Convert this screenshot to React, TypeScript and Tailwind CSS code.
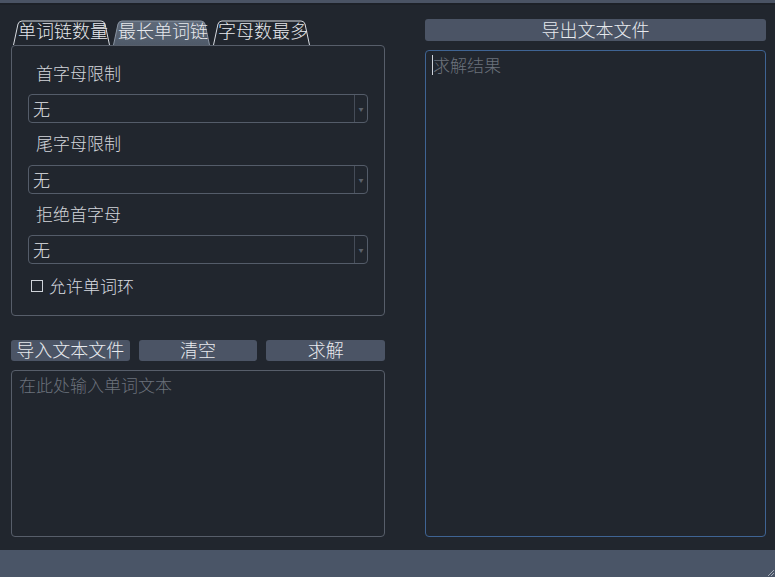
import React from "react";

const font = { fontFamily: '"Noto Sans CJK SC", "Noto Sans", sans-serif' };

function Tab({ label, selected, w }: { label: string; selected?: boolean; w: number }) {
  return (
    <div className="relative h-[27px] flex items-end pb-[3px]" style={{ width: w }}>
      <svg className="absolute inset-0" width={w} height={27} viewBox={`0 0 ${w} 27`}>
        <defs>
          <linearGradient id="selg" x1="0" y1="0" x2="0" y2="1">
            <stop offset="0" stopColor="#5f6a7a" />
            <stop offset="1" stopColor="#4f5a69" />
          </linearGradient>
        </defs>
        <path
          d={`M0.5 27 L5 6 Q6 3 9 3 L${w - 9} 3 Q${w - 6} 3 ${w - 5} 6 L${w - 0.5} 27 Z`}
          fill={selected ? "url(#selg)" : "none"}
        />
        <path
          d={`M0.5 27 L5 6 Q6 3 9 3 L${w - 9} 3 Q${w - 6} 3 ${w - 5} 6 L${w - 0.5} 27`}
          fill="none"
          stroke={selected ? "#8a95a3" : "#d8dce2"}
          strokeWidth="1"
        />
      </svg>
      <span className="relative pl-[5px] text-[18px] font-light leading-[24px] text-[#e6e8ec] whitespace-nowrap">{label}</span>
    </div>
  );
}

function Combo() {
  return (
    <div className="h-[29px] rounded-[4px] border border-[#545c69] flex items-center">
      <span className="flex-1 pl-[4px] text-[17px] font-light text-[#e2e4e8]">无</span>
      <div className="w-[13px] h-full border-l border-[#454c58] flex items-center justify-center">
        <span className="text-[5px] text-[#5a616c] leading-none">▼</span>
      </div>
    </div>
  );
}

export default function App() {
  return (
    <div className="w-[775px] h-[577px] bg-[#21262e] flex flex-col font-light" style={font}>
      <div className="h-[3px] bg-[#4a5364]" />
      <div className="h-[2px] bg-[#1d2128]" />
      <div className="flex-1 flex pl-[11px] pr-[9px] gap-[40px]">
        {/* Left column */}
        <div className="w-[374px] flex flex-col pt-[13px]">
          <div className="flex gap-[3px] pl-[2px]">
            <Tab label="单词链数量" w={97} />
            <Tab label="最长单词链" w={97} selected />
            <Tab label="字母数最多" w={97} />
          </div>
          <div className="h-[271px] rounded-[4px] border border-[#575e6a] px-[16px] pt-[17px] flex flex-col">
            <div className="h-[20px] pl-[8px] text-[17px] leading-[20px] text-[#d2d5da]">首字母限制</div>
            <div className="mt-[11px]"><Combo /></div>
            <div className="mt-[10px] h-[20px] pl-[8px] text-[17px] leading-[20px] text-[#d2d5da]">尾字母限制</div>
            <div className="mt-[12px]"><Combo /></div>
            <div className="mt-[10px] h-[20px] pl-[8px] text-[17px] leading-[20px] text-[#d2d5da]">拒绝首字母</div>
            <div className="mt-[11px]"><Combo /></div>
            <div className="mt-[12px] h-[20px] flex items-center pl-[3px] gap-[6px]">
              <div className="w-[12px] h-[12px] border border-[#cfd3d9]" />
              <span className="text-[17px] leading-[20px] text-[#d8dbe0]">允许单词环</span>
            </div>
          </div>
          <div className="mt-[24px] flex gap-[9px]">
            <div className="flex-1 h-[21px] pb-[2px] rounded-[3px] bg-[#4b5465] flex items-center justify-center text-[18px] text-[#e8eaee]">导入文本文件</div>
            <div className="flex-1 h-[21px] pb-[2px] rounded-[3px] bg-[#4b5465] flex items-center justify-center text-[18px] text-[#e8eaee]">清空</div>
            <div className="flex-1 h-[21px] pb-[2px] rounded-[3px] bg-[#4b5465] flex items-center justify-center text-[18px] text-[#e8eaee]">求解</div>
          </div>
          <div className="mt-[9px] h-[167px] rounded-[4px] border border-[#575e6a] px-[7px] pt-[2px]">
            <span className="text-[17px] leading-[24px] text-[#6c727c]">在此处输入单词文本</span>
          </div>
        </div>
        {/* Right column */}
        <div className="flex-1 flex flex-col pt-[14px]">
          <div className="h-[22px] pb-[2px] rounded-[3px] bg-[#4b5465] flex items-center justify-center text-[18px] text-[#e8eaee]">导出文本文件</div>
          <div className="mt-[9px] h-[487px] rounded-[4px] border border-[#3f6494] px-[6px] pt-[2px] flex items-start">
            <div className="w-[1px] h-[20px] mt-[2px] bg-[#d0d4da]" />
            <span className="text-[17px] leading-[24px] text-[#6c727c]">求解结果</span>
          </div>
        </div>
      </div>
      <div className="h-[27px] bg-[#4a5567] relative">
        <svg className="absolute right-0 bottom-0" width="10" height="10" viewBox="0 0 10 10">
          <path d="M9 3 L3 9 M9 6 L6 9" stroke="#a0a8b4" strokeWidth="1" />
        </svg>
      </div>
    </div>
  );
}
